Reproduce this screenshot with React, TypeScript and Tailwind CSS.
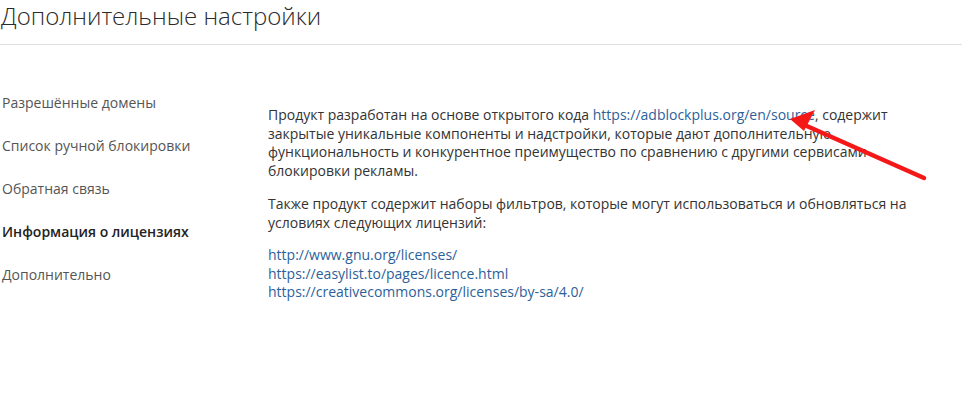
const menu = [
  { label: 'Разрешённые домены', active: false },
  { label: 'Список ручной блокировки', active: false },
  { label: 'Обратная связь', active: false },
  { label: 'Информация о лицензиях', active: true },
  { label: 'Дополнительно', active: false },
];

const licenses = [
  'http://www.gnu.org/licenses/',
  'https://easylist.to/pages/licence.html',
  'https://creativecommons.org/licenses/by-sa/4.0/',
];

export default function App() {
  return (
    <div className="relative w-[962px] h-[402px] bg-white overflow-hidden text-[#333] font-['Open_Sans',sans-serif]">
      {/* Header */}
      <div className="h-[45px] border-b border-[#e0e0e0]">
        <h1 className="text-[24px] font-light leading-[32px] pl-[1px] text-[#2b2b2b]">
          Дополнительные настройки
        </h1>
      </div>

      <div className="flex">
        {/* Sidebar */}
        <nav className="w-[268px] pt-[48px] pl-[2px]">
          <ul className="flex flex-col">
            {menu.map((item) => (
              <li
                key={item.label}
                className={`h-[43px] text-[14px] leading-[20px] ${
                  item.active ? 'font-semibold text-[#222]' : 'text-[#555]'
                }`}
              >
                {item.label}
              </li>
            ))}
          </ul>
        </nav>

        {/* Content */}
        <div className="w-[645px] pt-[61px] text-[14px] leading-[18.5px] text-[#333]">
          <p>
            Продукт разработан на основе открытого кода{' '}
            <a className="text-[#2d5f9a]">https://adblockplus.org/en/source</a>, содержит закрытые
            уникальные компоненты и надстройки, которые дают дополнительную функциональность и
            конкурентное преимущество по сравнению с другими сервисами блокировки рекламы.
          </p>
          <p className="mt-[15px]">
            Также продукт содержит наборы фильтров, которые могут использоваться и обновляться на
            условиях следующих лицензий:
          </p>
          <div className="mt-[14px] flex flex-col">
            {licenses.map((l) => (
              <a key={l} className="text-[#2d5f9a]">
                {l}
              </a>
            ))}
          </div>
        </div>
      </div>

      {/* Red annotation arrow */}
      <svg className="absolute left-0 top-0 pointer-events-none" width="962" height="402">
        <line x1="924" y1="178" x2="800" y2="123" stroke="#f41818" strokeWidth="4.5" strokeLinecap="round" />
        <polygon points="790,119 815,110 804,131" fill="#f41818" />
      </svg>
    </div>
  );
}
